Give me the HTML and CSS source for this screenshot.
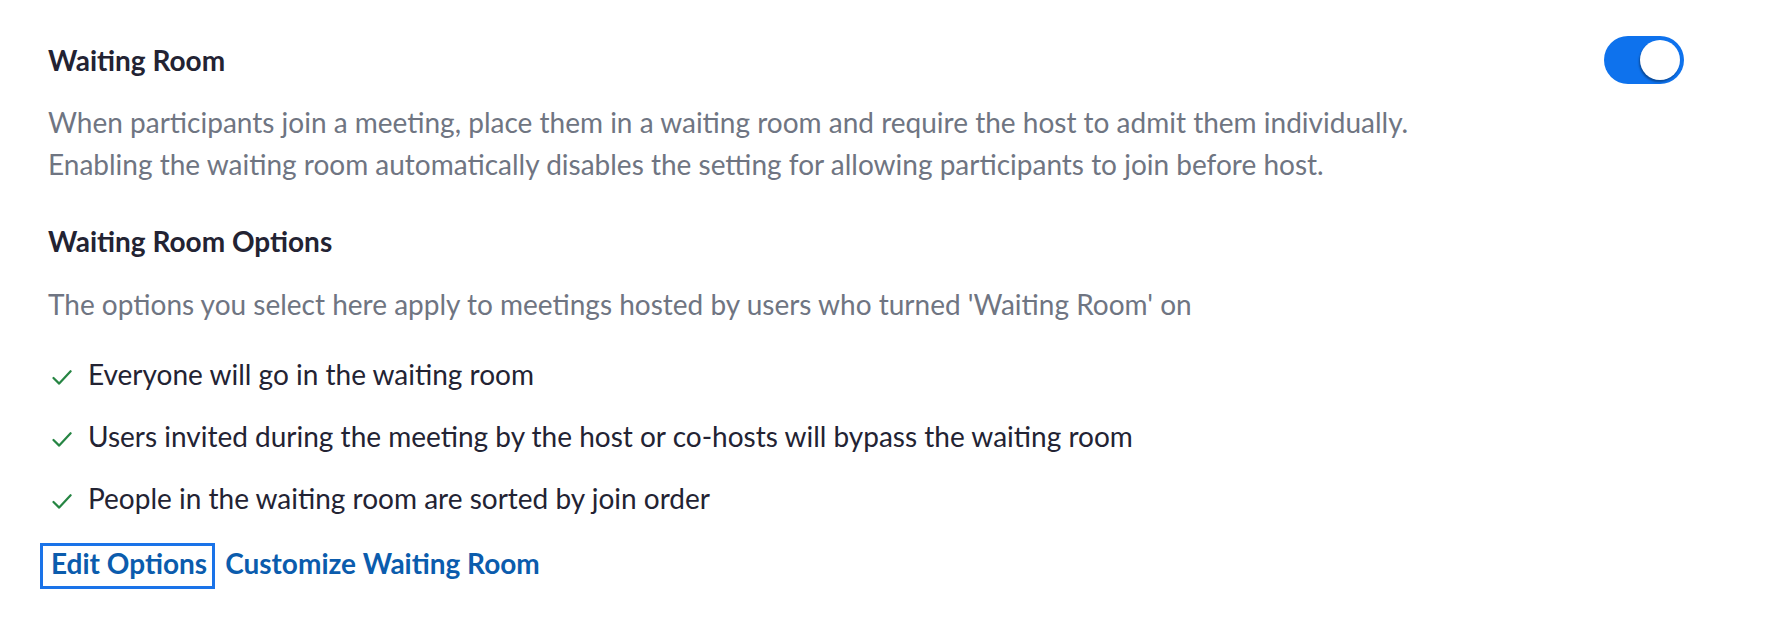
FILE: index.html
```html
<!DOCTYPE html>
<html lang="en">
<head>
<meta charset="utf-8">
<title>Waiting Room</title>
<link rel="stylesheet" href="styles.css">
</head>
<body>
<div class="setting">
  <div class="setting-head">
    <div class="title">Waiting Room</div>
    <div class="toggle" role="switch" aria-checked="true"><span class="knob"></span></div>
  </div>
  <p class="desc">When participants join a meeting, place them in a waiting room and require the host to admit them individually.<br>Enabling the waiting room automatically disables the setting for allowing participants to join before host.</p>
  <div class="sub-title">Waiting Room Options</div>
  <p class="sub-desc">The options you select here apply to meetings hosted by users who turned 'Waiting Room' on</p>
  <ul class="opts">
    <li class="opt"><svg class="check" width="20" height="16" viewBox="0 0 20 16"><path d="M1.5 8 L7.2 13.6 L18.6 1.2" fill="none" stroke="#268543" stroke-width="2.2" stroke-linecap="round" stroke-linejoin="round"/></svg><span>Everyone will go in the waiting room</span></li>
    <li class="opt"><svg class="check" width="20" height="16" viewBox="0 0 20 16"><path d="M1.5 8 L7.2 13.6 L18.6 1.2" fill="none" stroke="#268543" stroke-width="2.2" stroke-linecap="round" stroke-linejoin="round"/></svg><span>Users invited during the meeting by the host or co-hosts will bypass the waiting room</span></li>
    <li class="opt"><svg class="check" width="20" height="16" viewBox="0 0 20 16"><path d="M1.5 8 L7.2 13.6 L18.6 1.2" fill="none" stroke="#268543" stroke-width="2.2" stroke-linecap="round" stroke-linejoin="round"/></svg><span>People in the waiting room are sorted by join order</span></li>
  </ul>
  <div class="links">
    <a class="link link-focus" href="#">Edit Options</a>
    <a class="link" href="#">Customize Waiting Room</a>
  </div>
</div>
</body>
</html>
```

FILE: styles.css
```css
html, body {
  margin: 0;
  padding: 0;
  background: #ffffff;
}
body {
  font-family: Lato, "Open Sans", "Liberation Sans", sans-serif;
  font-size: 28px;
  line-height: 42px;
  color: #232333;
}
.setting {
  padding: 36px 108px 0 48px;
}
.setting-head {
  display: flex;
  align-items: center;
  justify-content: space-between;
}
.title, .sub-title {
  font-weight: 700;
  color: #232333;
}
.toggle {
  width: 80px;
  height: 48px;
  box-sizing: border-box;
  padding: 4px;
  border-radius: 24px;
  background: #0e72ed;
  display: flex;
  justify-content: flex-end;
}
.knob {
  width: 40px;
  height: 40px;
  border-radius: 50%;
  background: #ffffff;
  box-shadow: -1px 2px 2px rgba(0, 0, 0, 0.35);
}
.desc {
  margin: 17px 0 0;
  color: #6f7582;
}
.sub-title {
  margin-top: 35px;
}
.sub-desc {
  margin: 21px 0 0;
  color: #6f7582;
}
.opts {
  list-style: none;
  margin: 28px 0 0;
  padding: 0 0 0 4px;
  display: flex;
  flex-direction: column;
  gap: 20px;
}
.opt {
  display: flex;
  align-items: center;
  gap: 16px;
}
.check {
  flex: none;
  margin-top: 7px;
}
.links {
  margin-top: 23px;
  display: flex;
  align-items: baseline;
  gap: 10px;
  margin-left: -8px;
}
.link {
  color: #0b5cad;
  font-weight: 700;
  text-decoration: none;
}
.link-focus {
  display: inline-block;
  line-height: 34px;
  padding: 0 5px 6px 8px;
  border: 3px solid #1a73e8;
}
```
